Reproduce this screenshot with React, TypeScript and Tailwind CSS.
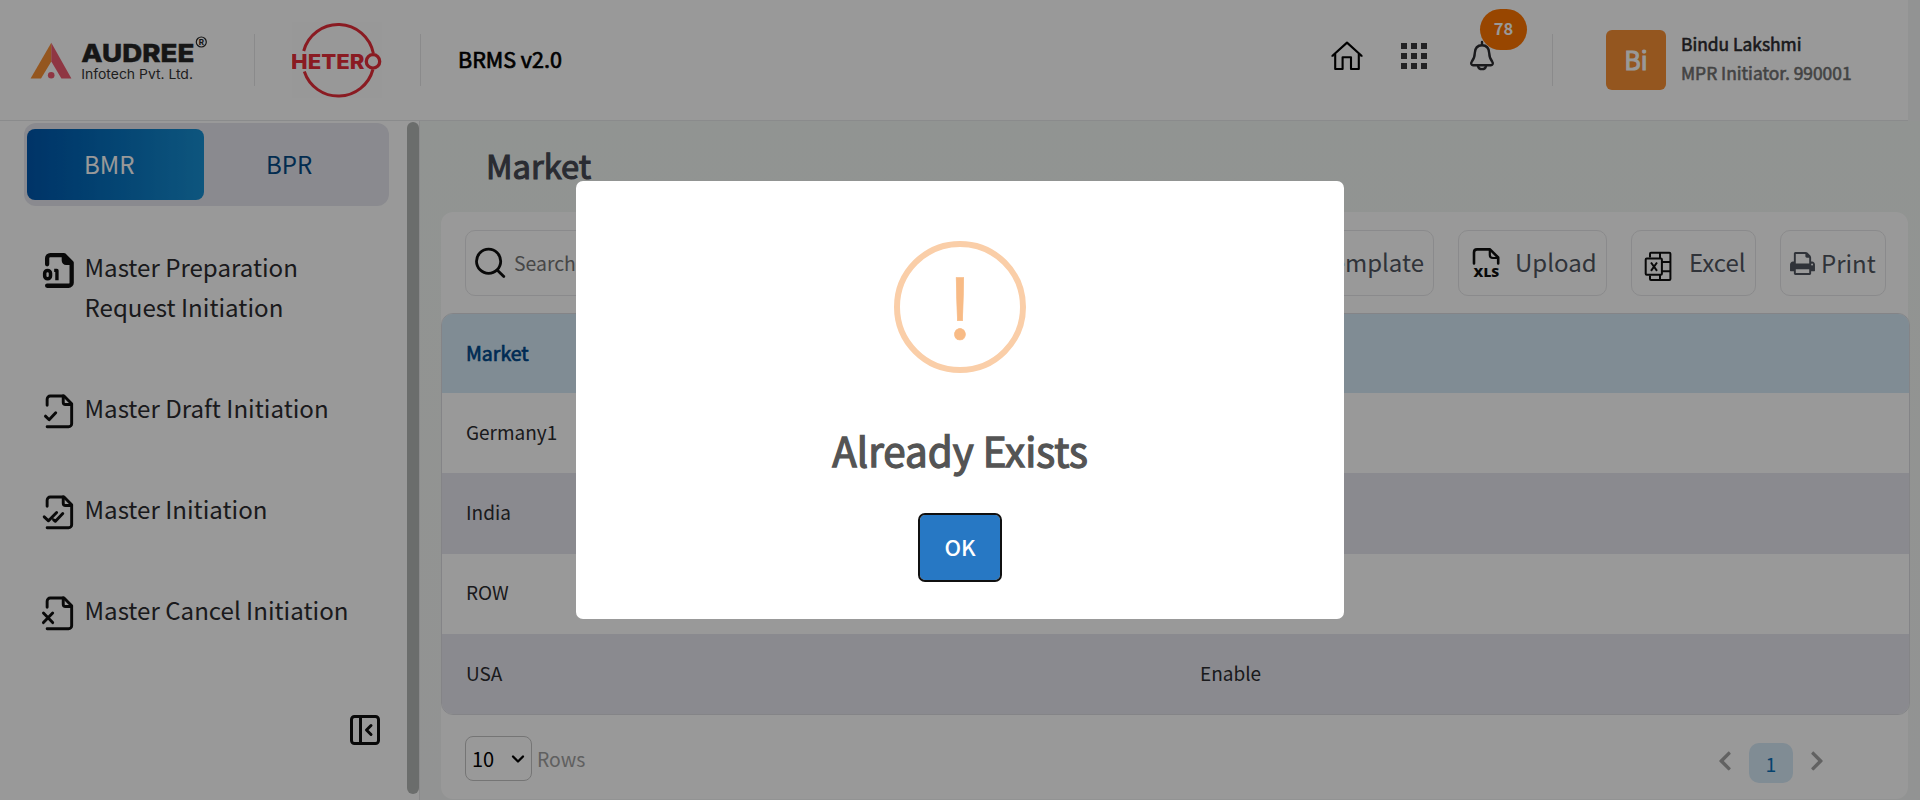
import React from "react";
import { PanelLeftClose, ChevronDown } from "lucide-react";
import { FaChevronLeft, FaChevronRight } from "react-icons/fa";

function AudreeLogo() {
  return (
    <svg width="180" height="50" viewBox="30 34 180 50" className="shrink-0">
      <path d="M51.3 42.7 L51.3 61.5 L41 78.4 L30.6 78.4 Z" fill="#f78f34" />
      <path d="M51.3 42.7 L71.4 78.4 L61.4 78.4 L51.3 61.5 Z" fill="#ee5b70" />
      <circle cx="51.2" cy="75.2" r="3.3" fill="#ee5b70" />
      <text x="81.3" y="62" fontSize="25" fontWeight="800" textLength="113" lengthAdjust="spacingAndGlyphs" fill="#262626" stroke="#262626" strokeWidth="0.4" className="font-['Inter']">AUDREE</text>
      <text x="81.3" y="78.6" fontSize="13" textLength="111.6" lengthAdjust="spacingAndGlyphs" fill="#333" className="font-['Inter']">Infotech Pvt. Ltd.</text>
      <circle cx="201.3" cy="42" r="5" fill="none" stroke="#262626" strokeWidth="1.2" />
      <text x="201.3" y="45" fontSize="8" fontWeight="700" textAnchor="middle" fill="#262626" className="font-['Inter']">R</text>
    </svg>
  );
}

function HeteroLogo() {
  return (
    <svg width="90" height="76" viewBox="292 22 90 76" className="shrink-0">
      <rect x="292" y="22" width="90" height="76" fill="#fefefe" />
      <path d="M303.7 51 A35.8 35.8 0 0 1 373.4 53.5" fill="none" stroke="#e62e3a" strokeWidth="3" />
      <path d="M372.9 69.5 A35.8 35.8 0 0 1 304.3 71.5" fill="none" stroke="#e62e3a" strokeWidth="3" />
      <text x="291" y="68.6" fontSize="20.5" fontWeight="800" textLength="73.5" lengthAdjust="spacingAndGlyphs" fill="#e62e3a" className="font-['Inter']">HETER</text>
      <circle cx="373" cy="61.4" r="6.7" fill="#fefefe" stroke="#e62e3a" strokeWidth="3.3" />
    </svg>
  );
}

function HomeIcon() {
  return (
    <svg width="32" height="30" viewBox="1331 41 32 30" fill="none" stroke="#000" strokeWidth="2.1" strokeLinejoin="round">
      <path d="M1332.5 56.8 V55.8 L1347 42.6 L1361.5 55.8 V56.8" />
      <path d="M1335.2 54 V69 H1342.6 V57.3 H1351 V69 H1358.8 V54" />
    </svg>
  );
}

function GridIcon() {
  return (
    <div className="grid grid-cols-3 gap-x-1 gap-y-[3.6px]">
      {Array.from({ length: 9 }, (_, i) => (
        <div key={i} className="size-[6px] bg-[#39393d]" />
      ))}
    </div>
  );
}

function BellIcon() {
  return (
    <svg width="26" height="32" viewBox="1469 40 26 32" fill="none" stroke="#2c2c30" strokeWidth="2.4" strokeLinejoin="round" strokeLinecap="round">
      <path d="M1482 42 V45" />
      <path d="M1482 45.2 C1477 45.2 1475 49 1474.8 53 C1474.6 58 1473.8 59.3 1471.8 61.6 C1470.6 63.2 1471.2 65.2 1473 65.2 H1491 C1492.8 65.2 1493.4 63.2 1492.2 61.6 C1490.2 59.3 1489.4 58 1489.2 53 C1489 49 1487 45.2 1482 45.2 Z" />
      <path d="M1478 66.2 A4.1 3.8 0 0 0 1486 66.2" />
    </svg>
  );
}

const PAGE = "M4 8V4a2 2 0 0 1 2-2h9l5 5v13a2 2 0 0 1-2 2H4";

function MenuIcon({ kind }: { kind: string }) {
  return (
    <svg width="36.8" height="36.8" viewBox="0 0 24 24" fill="none" stroke="#101010" strokeWidth="1.9" strokeLinecap="round" strokeLinejoin="round" className="overflow-visible">
      {kind === "digit" ? (
        <g strokeWidth="2.8">
          <path d={PAGE} />
          <path d="M14.4 2.4v3.2a2 2 0 0 0 2 2h3.2z" fill="#101010" strokeWidth="1.8" />
          <rect x="2.4" y="12" width="3.8" height="5.5" rx="1.9" strokeWidth="2.3" />
          <path d="M8.6 12h1.8v6.4" strokeWidth="2.2" strokeLinecap="butt" />
        </g>
      ) : (
        <>
          <path d={PAGE} />
          <path d="M14.5 2v4a1.5 1.5 0 0 0 1.5 1.5h4" />
        </>
      )}
      {kind === "check" && <path d="M2.9 15.1l2.4 2.3 4.3-4.5" />}
      {kind === "double" && <path d="M2.1 14.9l2.8 2.6 5.3-5.4M8.2 16.8l1.2 1 4.8-5.1" />}
      {kind === "cancel" && <path d="M1.6 11.8l6 6.2M7.6 11.8l-6 6.2" />}
    </svg>
  );
}

function XlsIcon() {
  return (
    <svg width="30" height="32" viewBox="1472 248 30 32" fill="none" stroke="#101010" strokeWidth="2.6" strokeLinecap="round" strokeLinejoin="round">
      <path d="M1474 264.5 V253.5 Q1474 250.4 1477 250.4 H1490 L1498.2 258.5 V264.5" />
      <path d="M1489.8 250.8 V256 Q1489.8 259 1493 259 H1498" strokeWidth="2.2" />
      <text x="1473.6" y="277.9" fontSize="13" fontWeight="800" textLength="25.6" lengthAdjust="spacingAndGlyphs" fill="#101010" stroke="none" className="font-['Open_Sans']">XLS</text>
    </svg>
  );
}

function ExcelIcon() {
  return (
    <svg width="28" height="31" viewBox="1644 250.5 28 31" fill="none" stroke="#101010" strokeWidth="2" strokeLinejoin="round">
      <path d="M1650 257 V253.3 Q1650 252.3 1651 252.3 H1669.3 Q1670.4 252.3 1670.4 253.3 V278.4 Q1670.4 279.4 1669.3 279.4 H1651 Q1650 279.4 1650 278.4 V275" />
      <rect x="1645.7" y="258" width="16.2" height="16.2" rx="1" />
      <path d="M1660 252 V258 M1660 274 V279 M1662 261.5 H1670 M1662 270.7 H1670" />
      <path d="M1651 262 L1657 270.3 M1657 262 L1651 270.3" />
    </svg>
  );
}

function PrintIcon() {
  return (
    <svg width="25" height="23" viewBox="0 128 1664 1536" fill="currentColor">
      <path d="M384 1536h896v-256H384v256zm0-640h896V512h-160q-40 0-68-28t-28-68V256H384v640zm1152 64q0-26-19-45t-45-19-45 19-19 45 19 45 45 19 45-19 19-45zm128 0v416q0 13-9.500 22.500t-22.500 9.500h-224v160q0 40-28 68t-68 28H352q-40 0-68-28t-28-68v-160H32q-13 0-22.500-9.500T0 1376V960q0-79 56.500-135.500T192 768h64V224q0-40 28-68t68-28h672q40 0 88 20t76 48l152 152q28 28 48 76t20 88v256h64q79 0 135.500 56.500T1664 960z" />
    </svg>
  );
}

const menu = [
  { kind: "digit", label: "Master Preparation Request Initiation" },
  { kind: "check", label: "Master Draft Initiation" },
  { kind: "double", label: "Master Initiation" },
  { kind: "cancel", label: "Master Cancel Initiation" },
];

const rows = [
  { market: "Germany1", status: "Enable" },
  { market: "India", status: "Enable" },
  { market: "ROW", status: "Enable" },
  { market: "USA", status: "Enable" },
];

function Header() {
  return (
    <header className="flex h-[121px] w-[1908px] shrink-0 items-start border-b border-[#e7e8ea] bg-white">
      <div className="flex h-[120px] items-center">
        <div className="ml-[30px] -mt-[2px]"><AudreeLogo /></div>
        <div className="ml-11 h-[52px] w-px bg-[#e6e7e8]" />
        <div className="ml-[37px]"><HeteroLogo /></div>
        <div className="ml-[38px] h-[52px] w-px bg-[#e6e7e8]" />
        <div className="ml-[37px] pb-[3px] text-[21.5px] leading-8 text-black [-webkit-text-stroke:0.7px_currentColor]">BRMS v2.0</div>
      </div>
      <div className="ml-auto flex h-[120px] items-center">
        <div className="-mt-2 flex items-center">
          <HomeIcon />
          <div className="ml-[38px]"><GridIcon /></div>
          <div className="relative ml-[42px]">
            <BellIcon />
            <div className="absolute -top-[31px] left-[11px] flex h-[41px] w-[47px] items-center justify-center rounded-full bg-[#fd7500] pb-[3px] text-[16.5px] font-bold text-white">78</div>
          </div>
        </div>
        <div className="ml-[57px] h-[52px] w-px bg-[#e6e7e8]" />
        <div className="ml-[53px] flex size-[60px] items-center justify-center rounded-md bg-[#f78f34] text-[25px] text-white [-webkit-text-stroke:1px_currentColor]">Bi</div>
        <div className="ml-[15px] w-[227px] pb-[4px] text-[17.4px] leading-[29.5px] [-webkit-text-stroke:0.6px_currentColor]">
          <div className="text-[#2c2c30]">Bindu Lakshmi</div>
          <div className="text-[#717171]">MPR Initiator. 990001</div>
        </div>
      </div>
    </header>
  );
}

function Sidebar() {
  return (
    <aside className="flex h-[679px] w-[420px] shrink-0 border-r border-[#e6e7e8] bg-white">
      <div className="flex w-[407px] flex-col pt-[2px]">
        <div className="ml-6 flex h-[83px] w-[365px] items-center rounded-xl bg-[#e6e7ee] pl-[3px] text-[24px]">
          <div className="flex h-[71px] w-[177px] items-center rounded-lg bg-gradient-to-r from-[#0057ad] to-[#178fd2] pb-[2px] pl-[57px] text-white">BMR</div>
          <div className="ml-[62px] pb-[2px] text-[#044a85]">BPR</div>
        </div>
        <nav className="mt-[41px] flex flex-col gap-[61px] pl-[41px]">
          {menu.map((m) => (
            <div key={m.kind} className="flex">
              <div className="mt-[5.4px] h-0 w-[43.5px]"><MenuIcon kind={m.kind} /></div>
              <div className="w-[290px] text-[24.1px] leading-10 text-[#2c2c30]">{m.label}</div>
            </div>
          ))}
        </nav>
        <PanelLeftClose className="ml-[347px] mt-[82px]" size={36} color="#101010" strokeWidth={2} />
      </div>
      <div className="mt-px h-[672px] w-3 rounded-full bg-[#b3b6b4]" />
    </aside>
  );
}

const button = "flex h-[66px] shrink-0 items-center rounded-[10px] border border-[#e7e7e9]";

function Content() {
  return (
    <main className="flex h-[679px] w-[1500px] flex-col bg-gradient-to-b from-[#f2f7f3] to-[#f4f6f5] pl-[21px]">
      <h1 className="mt-[22px] h-[69px] pl-[45px] text-[32.7px] leading-[44px] text-[#474a54] [-webkit-text-stroke:1.1px_currentColor]">Market</h1>
      <section className="h-[587px] w-[1467px] rounded-xl bg-white pt-[18px]">
        <div className="flex items-center pl-6 pr-[22px] text-[24px] text-[#50565f]">
          <div className={`${button} w-[400px] pl-2 text-[19.4px] text-[#757575]`}>
            <svg width="33" height="33" viewBox="474 247 33 33" fill="none" stroke="#101010" strokeWidth="2.8" strokeLinecap="round">
              <circle cx="488.6" cy="261.3" r="12.1" />
              <path d="M497.4 270.2 L503.8 276.6" />
            </svg>
            <span className="ml-[7px]">Search</span>
          </div>
          <div className={`${button} ml-auto w-[190px] justify-end pb-[2px] pr-[9px]`}>Template</div>
          <div className={`${button} ml-6 w-[149px] pl-[13px]`}>
            <XlsIcon />
            <span className="ml-[13px] pb-[2px]">Upload</span>
          </div>
          <div className={`${button} ml-6 w-[125px] pl-3`}>
            <div className="mt-[6px]"><ExcelIcon /></div>
            <span className="ml-[17px] pb-[2px]">Excel</span>
          </div>
          <div className={`${button} ml-6 w-[106px] pl-[9px]`}>
            <PrintIcon />
            <span className="ml-[6px]">Print</span>
          </div>
        </div>
        <div className="mt-[17px] w-[1469px] overflow-hidden rounded-xl border border-[#dcdde2] text-[19px] text-[#2c2c30]">
          <div className="flex h-[79px] items-center bg-[#d5e9f7] pb-[2px] pl-6 text-[19.5px] text-[#00498c] [-webkit-text-stroke:0.7px_currentColor]">
            <div className="w-[734px]">Market</div>
            <div>Status</div>
          </div>
          {rows.map((r, i) => (
            <div key={r.market} className={`flex h-[80.3px] items-center pb-[2px] pl-6 ${i % 2 ? "bg-[#e6e7ee]" : "bg-white"}`}>
              <div className="w-[734px]">{r.market}</div>
              <div>{r.status}</div>
            </div>
          ))}
        </div>
        <div className="flex pl-6 pt-[21px] text-[19.4px]">
          <div className="flex h-[45px] w-[67px] items-center justify-between rounded-lg border border-[#c4c4c4] pl-[6px] pr-[3px] text-[20px] text-black">
            10
            <ChevronDown size={20} strokeWidth={2.8} />
          </div>
          <div className="ml-[5px] leading-[45px] text-[#a0a0a0]">Rows</div>
          <div className="ml-auto mr-[80px] mt-[7px] flex h-10 items-center text-[#a3a3a3]">
            <FaChevronLeft size={22} className="-mt-1" />
            <div className="mx-[13px] flex h-10 w-11 items-center justify-center rounded-[10px] bg-[#d5e9f7] text-[#0a70b8]">1</div>
            <FaChevronRight size={22} className="-mt-1" />
          </div>
        </div>
      </section>
    </main>
  );
}

function Modal() {
  return (
    <div className="absolute inset-0 flex justify-center bg-black/40 pt-[181px]">
      <div className="flex h-[438px] w-[768px] flex-col items-center rounded-[7px] bg-white pt-[60px]">
        <div className="flex size-[132px] items-center justify-center rounded-full border-[6px] border-[#facea8] pb-[6px] text-[82px] leading-none text-[#f8bb86] [-webkit-text-stroke:0.6px_currentColor]">!</div>
        <div className="mt-[47px] text-[40.3px] leading-[60px] text-[#545454] [-webkit-text-stroke:1.3px_currentColor]">Already Exists</div>
        <button className="mt-[35px] flex h-[65px] w-[80px] items-center justify-center rounded-[5px] bg-[#2778c4] pb-[3px] text-[22px] font-medium text-white outline-2 outline-[#101010]">OK</button>
      </div>
    </div>
  );
}

export default function App() {
  return (
    <div className="relative h-[800px] w-[1920px] overflow-hidden bg-[#f4f6f5] font-['Noto_Sans_CJK_JP','Noto_Sans_CJK_SC',sans-serif]">
      <Header />
      <div className="flex">
        <Sidebar />
        <Content />
      </div>
      <Modal />
    </div>
  );
}
